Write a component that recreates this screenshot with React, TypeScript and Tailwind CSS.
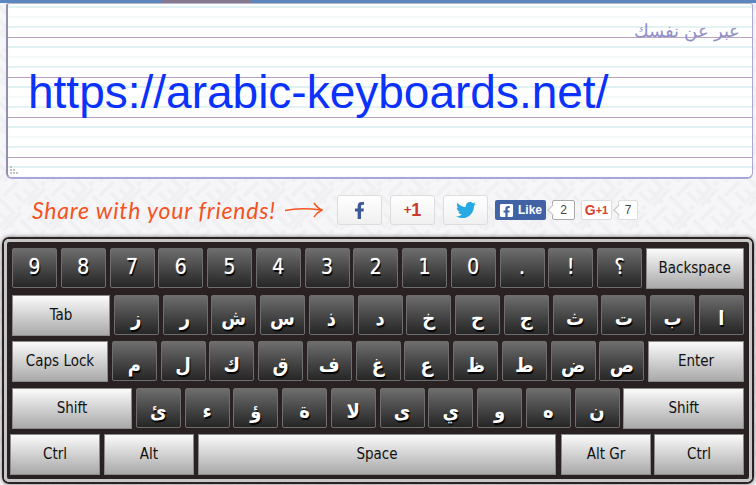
import { FaFacebookF, FaFacebookSquare, FaTwitter } from "react-icons/fa";

const keyFont = "[font-family:'DejaVu_Sans_Condensed','DejaVu_Sans',sans-serif]";

type KeyDef = { label: string; w?: string };

const CharKey = ({ label }: KeyDef) => (
  <div
    className={`flex h-10 w-[45px] shrink-0 items-center justify-center rounded-[2px] border border-[#6e6e6e] bg-gradient-to-b from-[#6e6e6e] to-[#262626] text-[21px] text-white [text-shadow:1px_2px_1px_#000,0_0_1px_#fff] ${keyFont}`}
  >
    {label}
  </div>
);

const ArabicKey = ({ label }: KeyDef) => (
  <div
    className={`flex h-10 w-[45px] shrink-0 items-center justify-center rounded-[2px] border border-[#6e6e6e] bg-gradient-to-b from-[#6e6e6e] to-[#262626] pt-[7px] text-[20px] font-bold text-white [text-shadow:1px_2px_1px_#000] ${keyFont}`}
  >
    {label}
  </div>
);

const ActionKey = ({ label, w }: KeyDef) => (
  <div
    className={`flex h-[41px] shrink-0 items-center justify-center border border-[#8a8a8a] bg-gradient-to-b from-[#fbfbfb] to-[#a9a9a9] text-[15px] text-[#111] ${keyFont} ${w}`}
  >
    {label}
  </div>
);

const row1 = ["9", "8", "7", "6", "5", "4", "3", "2", "1", "0", ".", "!", "؟"];
const row2 = ["ز", "ر", "ش", "س", "ذ", "د", "خ", "ح", "ج", "ث", "ت", "ب", "ا"];
const row3 = ["م", "ل", "ك", "ق", "ف", "غ", "ع", "ظ", "ط", "ض", "ص"];
const row4 = ["ئ", "ء", "ؤ", "ة", "لا", "ى", "ي", "و", "ه", "ن"];

const Maze = () => (
  <svg className="absolute inset-0 h-full w-full" aria-hidden="true">
    <defs>
      <pattern id="maze" width="34" height="34" patternUnits="userSpaceOnUse" patternTransform="rotate(45)">
        <path
          d="M0 5H24V24H10M34 15H14M5 34V14M24 34V29M29 0V24"
          fill="none"
          stroke="#f0f0f3"
          strokeWidth="4"
        />
      </pattern>
    </defs>
    <rect width="100%" height="100%" fill="url(#maze)" />
  </svg>
);

const SocialButton = ({ children, w }: { children: React.ReactNode; w: string }) => (
  <div className={`flex h-[30px] items-center justify-center rounded-[3px] border border-[#dcdcdc] bg-gradient-to-b from-white to-[#f0f0f0] ${w}`}>
    {children}
  </div>
);

const Counter = ({ value, border }: { value: string; border: string }) => (
  <div className={`relative ml-[6px] flex h-5 items-center justify-center rounded-[2px] border bg-white text-[12px] text-[#444] [font-family:'Liberation_Sans',sans-serif] ${border}`}>
    <span className="absolute -left-[4px] top-[5px] h-2 w-2 rotate-45 border-b border-l border-[#c4c4c4] bg-white" />
    {value}
  </div>
);

export default function App() {
  return (
    <div className="relative h-[485px] w-[756px] overflow-hidden bg-[#f6f6f8]">
      <Maze />
      <div className="relative flex h-full flex-col">
        <div className="flex h-[3px] shrink-0 bg-[#5b86c0]">
          <div className="ml-[162px] h-full w-[90px] bg-[#85798f]" />
        </div>

        <div className="relative ml-[6px] h-[176px] w-[747px] shrink-0 overflow-hidden rounded-b-[6px] rounded-t-[3px] border-b-2 border-l-2 border-r border-t border-b-[#a9a6dc] border-l-[#8f8fae] border-r-[#a9a6dc] border-t-[#b7b7c9] bg-white">
          <div className="h-full bg-[linear-gradient(#e0f1f2_2px,transparent_2px),linear-gradient(#f6fafa_2px,transparent_2px),linear-gradient(#e3f2f3_2px,transparent_2px),linear-gradient(#b9a2c0_1px,transparent_1px)] bg-[length:100%_40px] bg-[position:0_2px,0_12px,0_22px,0_33px] bg-repeat-y">
            <p className="px-[12px] pt-[13px] text-right text-[17.5px] leading-7 text-[#9090c8] [font-family:'Liberation_Sans',sans-serif]" dir="rtl">
              عبر عن نفسك
            </p>
            <p className="mt-[21px] whitespace-nowrap pl-[20px] text-[46px] leading-[52px] text-[#0a32fa] [font-family:'Liberation_Sans',sans-serif]">
              https://arabic-keyboards.net/
            </p>
          </div>
          <div className="absolute bottom-[3px] left-[2px] grid grid-cols-3 gap-px">
            <span className="h-[2px] w-[2px] bg-[#c4c4c4]" />
            <span className="h-[2px] w-[2px]" />
            <span className="h-[2px] w-[2px]" />
            <span className="h-[2px] w-[2px] bg-[#c4c4c4]" />
            <span className="h-[2px] w-[2px] bg-[#c4c4c4]" />
            <span className="h-[2px] w-[2px]" />
            <span className="h-[2px] w-[2px] bg-[#c4c4c4]" />
            <span className="h-[2px] w-[2px] bg-[#c4c4c4]" />
            <span className="h-[2px] w-[2px] bg-[#c4c4c4]" />
          </div>
        </div>

        <div className="flex h-[58px] shrink-0 items-center pl-[32px] pt-[4px]">
          <span className="w-[241px] whitespace-nowrap text-[23px] italic tracking-[0.8px] text-[#f4531f] [font-family:'Lato',sans-serif]">
            Share with your friends!
          </span>
          <svg className="ml-[12px] w-[38px]" height="16" viewBox="0 0 38 16" fill="none" stroke="#f4531f" strokeWidth="1.5">
            <path d="M0 8.5C12 6 24 6.5 36.5 8" />
            <path d="M29 1C31 4 33 6.5 37 8C33 10 31 12 29 15" />
          </svg>
          <SocialButton w="ml-[14px] w-[45px]">
            <FaFacebookF className="text-[17px] text-[#3b5998]" />
          </SocialButton>
          <SocialButton w="ml-[8px] w-[45px]">
            <span className="flex items-center font-bold text-[#c9392c] [font-family:'Liberation_Sans',sans-serif]">
              <span className="text-[13px]">+</span>
              <span className="text-[18px]">1</span>
            </span>
          </SocialButton>
          <SocialButton w="ml-[8px] w-[45px]">
            <FaTwitter className="text-[20px] text-[#29a9e1]" />
          </SocialButton>
          <div className="ml-[7px] flex h-5 w-[51px] items-center rounded-[2px] bg-[#4262a6] pl-[4px]">
            <FaFacebookSquare className="text-[15px] text-white" />
            <span className="ml-[4px] text-[12px] font-bold text-white [font-family:'Liberation_Sans',sans-serif]">Like</span>
          </div>
          <Counter value="2" border="w-[23px] border-[#a8a8a8]" />
          <div className="ml-[6px] flex h-5 w-[31px] items-center justify-center rounded-[2px] border border-[#dcdcdc] bg-white font-bold text-[#d8412f] [font-family:'Liberation_Sans',sans-serif]">
            <span className="text-[14px]">G</span>
            <span className="text-[11px]">+1</span>
          </div>
          <Counter value="7" border="w-[20px] border-[#dcdcdc]" />
        </div>

        <div className="ml-[2px] h-[247px] w-[752px] shrink-0 rounded-[7px] border-2 border-[#2a2222] shadow-[0_0_4px_rgba(0,0,0,0.55)]">
          <div className="h-full rounded-[5px] border-[3px] border-[#c6c6c6] bg-[#2a2222]">
            <div className="flex flex-col gap-[5.5px] pl-[5px] pt-[6px]">
              <div className="flex items-start gap-[3.75px]">
                {row1.map((k) => <CharKey key={k} label={k} />)}
                <ActionKey label="Backspace" w="w-[98px]" />
              </div>
              <div className="flex items-start gap-[3.75px]">
                <ActionKey label="Tab" w="w-[98px]" />
                {row2.map((k) => <ArabicKey key={k} label={k} />)}
              </div>
              <div className="flex items-start gap-[3.75px]">
                <ActionKey label="Caps Lock" w="w-[96px]" />
                {row3.map((k) => <ArabicKey key={k} label={k} />)}
                <ActionKey label="Enter" w="w-[96px]" />
              </div>
              <div className="flex items-start gap-[3.75px]">
                <ActionKey label="Shift" w="w-[120px]" />
                {row4.map((k) => <ArabicKey key={k} label={k} />)}
                <ActionKey label="Shift" w="w-[121px]" />
              </div>
              <div className="-ml-[2px] flex items-start gap-[4px]">
                <ActionKey label="Ctrl" w="w-[90px]" />
                <ActionKey label="Alt" w="w-[90px]" />
                <ActionKey label="Space" w="w-[358px]" />
                <ActionKey label="Alt Gr" w="w-[90px] ml-[1px]" />
                <ActionKey label="Ctrl" w="w-[90px] -ml-[1px]" />
              </div>
            </div>
          </div>
        </div>
      </div>
    </div>
  );
}
